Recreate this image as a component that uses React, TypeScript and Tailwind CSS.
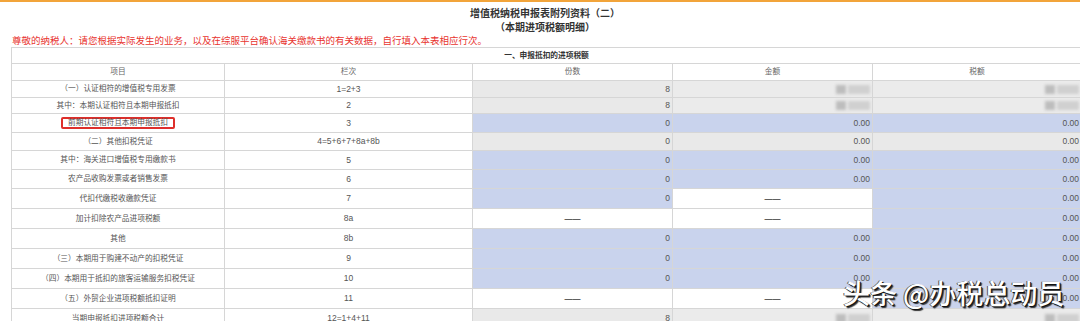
import React from "react";

type Kind = "gray" | "blue" | "dash" | "blur";
type Cell = { kind: Kind; value?: string };
type Row = { name: string; no: string; h: string; cells: Cell[]; boxed?: boolean };

const g = (value: string): Cell => ({ kind: "gray", value });
const b = (value: string): Cell => ({ kind: "blue", value });
const dash: Cell = { kind: "dash" };
const blur: Cell = { kind: "blur" };

const rows: Row[] = [
  { name: "（一）认证相符的增值税专用发票", no: "1=2+3", h: "h-[17px]", cells: [g("8"), blur, blur] },
  { name: "其中：本期认证相符且本期申报抵扣", no: "2", h: "h-[16px]", cells: [g("8"), blur, blur] },
  { name: "前期认证相符且本期申报抵扣", no: "3", h: "h-[19px]", cells: [b("0"), b("0.00"), b("0.00")], boxed: true },
  { name: "（二）其他扣税凭证", no: "4=5+6+7+8a+8b", h: "h-[18px]", cells: [g("0"), g("0.00"), g("0.00")] },
  { name: "其中：海关进口增值税专用缴款书", no: "5", h: "h-[19px]", cells: [b("0"), b("0.00"), b("0.00")] },
  { name: "农产品收购发票或者销售发票", no: "6", h: "h-[19px]", cells: [b("0"), b("0.00"), b("0.00")] },
  { name: "代扣代缴税收缴款凭证", no: "7", h: "h-[20px]", cells: [b("0"), dash, b("0.00")] },
  { name: "加计扣除农产品进项税额", no: "8a", h: "h-[20px]", cells: [dash, dash, b("0.00")] },
  { name: "其他", no: "8b", h: "h-[20px]", cells: [b("0"), b("0.00"), b("0.00")] },
  { name: "（三）本期用于购建不动产的扣税凭证", no: "9", h: "h-[20px]", cells: [b("0"), b("0.00"), b("0.00")] },
  { name: "（四）本期用于抵扣的旅客运输服务扣税凭证", no: "10", h: "h-[20px]", cells: [b("0"), b("0.00"), b("0.00")] },
  { name: "（五）外贸企业进项税额抵扣证明", no: "11", h: "h-[20px]", cells: [dash, dash, b("0.00")] },
  { name: "当期申报抵扣进项税额合计", no: "12=1+4+11", h: "h-[20px]", cells: [g("8"), blur, blur] },
];

const widths = ["w-[200px]", "w-[200px]", "w-[209px]"];

function ValueCell({ cell, width }: { cell: Cell; width: string }) {
  if (cell.kind === "dash") {
    return (
      <div className={`${width} flex shrink-0 items-center justify-center border-r border-[#d6d6d6] bg-white text-[8px] font-bold text-[#333]`}>
        ——
      </div>
    );
  }
  if (cell.kind === "blur") {
    // blurred-out figures
    return (
      <div className={`${width} flex shrink-0 items-center justify-end gap-[2px] border-r border-[#d6d6d6] bg-[#ebebeb] pr-[2px]`}>
        <span className="h-[9px] w-[10px] bg-[#bdbdbd] blur-[1.5px]" />
        <span className="h-[9px] w-[22px] bg-[#d0d0d0] blur-[1.5px]" />
      </div>
    );
  }
  const bg = cell.kind === "blue" ? "bg-[#c9d3ed]" : "bg-[#e9e9e9]";
  return (
    <div className={`${width} ${bg} flex shrink-0 items-center justify-end border-r border-[#d6d6d6] pr-[2px] text-[8.5px] text-[#555]`}>
      {cell.value}
    </div>
  );
}

export default function App() {
  return (
    <div className="relative h-[321px] w-[1080px] overflow-hidden bg-white font-['Liberation_Sans','Noto_Sans_CJK_SC',sans-serif]">
      <div className="h-[2px] bg-[#f2a43a]" />

      {/* title */}
      <div className="pt-[5px] text-center text-[10px] leading-[14px] font-bold text-[#333]">
        <p className="pl-[10px]">增值税纳税申报表附列资料（二）</p>
        <p className="pl-[10px]">（本期进项税额明细）</p>
      </div>

      <p className="h-[12px] pl-[12px] text-[9.5px] leading-[12px] text-[#e8342f]">
        尊敬的纳税人：请您根据实际发生的业务，以及在综服平台确认海关缴款书的有关数据，自行填入本表相应行次。
      </p>

      {/* table */}
      <div className="ml-[11px] w-[1071px] border-t border-l border-[#d6d6d6]">
        <div className="flex h-[16px] items-center justify-center border-r border-b border-[#d6d6d6] text-[7.7px] font-bold text-[#333]">
          一、申报抵扣的进项税额
        </div>

        <div className="flex h-[17px] border-b border-[#d6d6d6] text-[7.7px] text-[#666]">
          <div className="flex w-[213px] shrink-0 items-center justify-center border-r border-[#d6d6d6]">项目</div>
          <div className="flex w-[248px] shrink-0 items-center justify-center border-r border-[#d6d6d6]">栏次</div>
          <div className="flex w-[200px] shrink-0 items-center justify-center border-r border-[#d6d6d6]">份数</div>
          <div className="flex w-[200px] shrink-0 items-center justify-center border-r border-[#d6d6d6]">金额</div>
          <div className="flex w-[209px] shrink-0 items-center justify-center border-r border-[#d6d6d6]">税额</div>
        </div>

        {rows.map((row) => (
          <div key={row.no} className={`${row.h} flex border-b border-[#d6d6d6]`}>
            <div className="flex w-[213px] shrink-0 items-center justify-center border-r border-[#d6d6d6] text-[7.7px] text-[#555]">
              {row.boxed ? (
                <span className="rounded-[2px] border-2 border-[#de2f2b] px-[5px] leading-[8px]">{row.name}</span>
              ) : (
                row.name
              )}
            </div>
            <div className="flex w-[248px] shrink-0 items-center justify-center border-r border-[#d6d6d6] text-[8.5px] text-[#555]">
              {row.no}
            </div>
            {row.cells.map((cell, i) => (
              <ValueCell key={i} cell={cell} width={widths[i]} />
            ))}
          </div>
        ))}
      </div>

      {/* watermark */}
      <div className="absolute top-[279px] left-[843px] text-[27px] leading-none font-medium whitespace-nowrap text-white font-['Noto_Sans_CJK_SC',sans-serif] [text-shadow:1px_1px_0_#111,2px_2px_1px_#333,-1px_0_0_#555]">
        头条 @办税总动员
      </div>
    </div>
  );
}
